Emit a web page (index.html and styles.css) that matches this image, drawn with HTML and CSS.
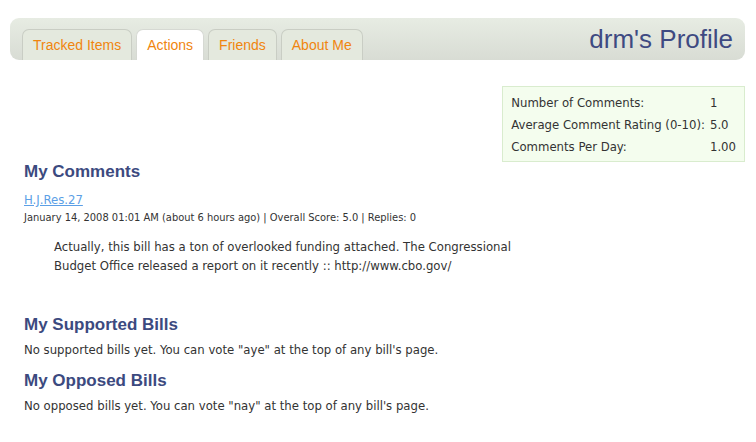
FILE: index.html
```html
<!DOCTYPE html>
<html>
<head>
<meta charset="utf-8">
<link rel="stylesheet" href="styles.css">
</head>
<body>
<div class="page">
  <div class="header">
    <ul class="tabs">
      <li class="tab">Tracked Items</li>
      <li class="tab active">Actions</li>
      <li class="tab">Friends</li>
      <li class="tab">About Me</li>
    </ul>
    <h1 class="title">drm's Profile</h1>
  </div>
  <div class="stats-row">
    <table class="stats">
      <tr><td>Number of Comments:</td><td class="num">1</td></tr>
      <tr><td>Average Comment Rating (0-10):</td><td class="num">5.0</td></tr>
      <tr><td>Comments Per Day:</td><td class="num">1.00</td></tr>
    </table>
  </div>
  <div class="content">
    <h2 class="section-title first">My Comments</h2>
    <a class="bill-link" href="#">H.J.Res.27</a>
    <div class="meta">January 14, 2008 01:01 AM (about 6 hours ago) | Overall Score: 5.0 | Replies: 0</div>
    <p class="comment">Actually, this bill has a ton of overlooked funding attached. The Congressional<br>Budget Office released a report on it recently :: http://www.cbo.gov/</p>
    <h2 class="section-title supported">My Supported Bills</h2>
    <p class="note">No supported bills yet. You can vote "aye" at the top of any bill's page.</p>
    <h2 class="section-title opposed">My Opposed Bills</h2>
    <p class="note">No opposed bills yet. You can vote "nay" at the top of any bill's page.</p>
  </div>
</div>
</body>
</html>
```
FILE: styles.css
```css
html, body {
  margin: 0;
  padding: 0;
  background: #ffffff;
}
.page {
  padding: 18px 11px 0 10px;
  font-family: "DejaVu Sans Condensed", "DejaVu Sans", sans-serif;
  font-stretch: condensed;
  color: #333333;
}
.header {
  display: flex;
  align-items: flex-end;
  justify-content: space-between;
  height: 42px;
  border-radius: 9px;
  background: linear-gradient(#e7ece3, #d8dcd4);
  box-sizing: border-box;
  padding: 0 12px 0 12px;
}
.tabs {
  list-style: none;
  margin: 0;
  padding: 0;
  display: flex;
  gap: 4px;
  align-self: flex-end;
}
.tab {
  height: 31px;
  box-sizing: border-box;
  padding: 7px 10px 0 10px;
  border: 1px solid #c9cdc4;
  border-bottom: none;
  border-radius: 7px 7px 0 0;
  background: #e4e9de;
  font-family: "Liberation Sans", Arial, sans-serif;
  font-stretch: normal;
  font-size: 14px;
  color: #f0850e;
}
.tab.active {
  background: #ffffff;
  border-color: #d6d9d3;
}
.title {
  margin: 0;
  align-self: center;
  font-family: "Liberation Sans", Arial, sans-serif;
  font-stretch: normal;
  font-weight: normal;
  font-size: 26px;
  color: #3e4a82;
}
.stats-row {
  display: flex;
  justify-content: flex-end;
  margin-top: 26px;
}
.stats {
  border: 1px solid #d9ecce;
  background: #f4fdee;
  border-collapse: separate;
  border-spacing: 0;
  padding: 4px 8px 4px 8px;
  font-size: 13px;
  color: #333;
}
.stats td {
  height: 22px;
  padding: 0;
  white-space: nowrap;
}
.stats td.num {
  text-align: left;
  padding-left: 5px;
  padding-right: 0;
}
.content {
  padding-left: 14px;
}
.section-title {
  margin: 0;
  font-family: "Liberation Sans", Arial, sans-serif;
  font-stretch: normal;
  font-size: 17px;
  font-weight: bold;
  color: #3c4a7f;
}
.bill-link {
  display: inline-block;
  margin-top: 10px;
  font-size: 13px;
  color: #5c9fe6;
}
.meta {
  margin-top: 3px;
  font-size: 11px;
  color: #333;
}
.comment {
  margin: 13px 0 0 30px;
  font-size: 13px;
  line-height: 19px;
}
.section-title.supported {
  margin-top: 40px;
}
.section-title.opposed {
  margin-top: 14px;
}
.note {
  margin: 7px 0 0 0;
  font-size: 13px;
}
```
